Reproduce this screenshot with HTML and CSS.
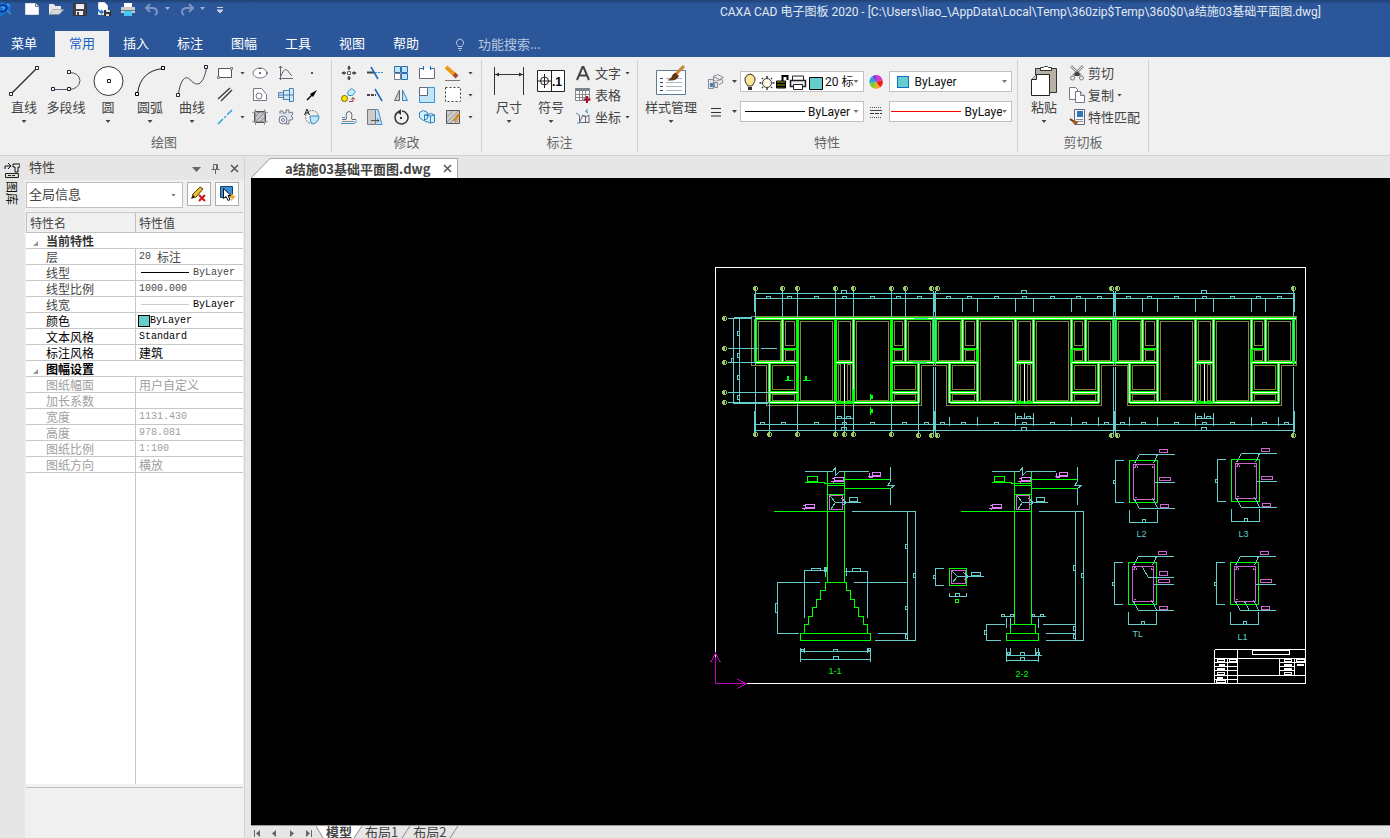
FILE: index.html
```html
<!DOCTYPE html>
<html lang="zh-CN">

<head>
  <meta charset="UTF-8">
  <meta name="viewport" content="width=device-width, initial-scale=1.0">
  <title>CAXA CAD 电子图板 2020</title>
  <link rel="stylesheet" href="styles.css">
</head>

<body>
  <header class="header">
    <div class="titlebar">
      <div class="quick">
        <svg class="logo" width="12" height="18" viewBox="0 0 12 18"><path d="M0 3l3-1 2 2 4-1 2 3-1 3 1 2-2 1-3 0-2 3-4 1z" fill="#1673d8"/><path d="M0 6l3-1 3 1 1 2-2 3-3 1-2-1" fill="none" stroke="#0a2f86" stroke-width="1.5"/><path d="M1 7l3 0 0 3M7 4l3 2M7 11l4 3" stroke="#4db4ff" fill="none"/></svg>
        <button class="quickBtn" aria-label="新建"><svg width="16" height="16"><path d="M1.5 2.5h10l3 3v8h-13z" fill="#fff" stroke="#ddd"/><path d="M11.5 2.5v3h3" fill="#ddd" stroke="#777"/></svg></button>
        <button class="quickBtn" aria-label="打开"><svg width="16" height="16"><path d="M1.5 13.5v-10h4l2 2h5v3" fill="#e8e8e8" stroke="#eee"/><path d="M1 13.5l4-5h11l-5 5z" fill="#d8d8d8" stroke="#888" stroke-width=".5"/></svg></button>
        <button class="quickBtn" aria-label="保存"><svg width="16" height="16"><path d="M1.5 2.5h13v12h-13z" fill="#444" stroke="#333"/><path d="M4 3h8v5h-8zM4 10h7v4h-7z" fill="#eee"/><path d="M5 11h2v3h-2z" fill="#444"/></svg></button>
        <button class="quickBtn" aria-label="另存为"><svg width="16" height="16"><path d="M2.5 1.5h6l3 3v9h-9z" fill="#fff" stroke="#ddd"/><path d="M2 8q1 4 5 3m-2-2l2 2-2 2" stroke="#287acb" stroke-width="1.5" fill="none"/><path d="M8 9h7v6h-7z" fill="#333"/><path d="M10 9h4v2h-4zM10 13h3v2h-3z" fill="#ddd"/></svg></button>
        <button class="quickBtn" aria-label="打印"><svg width="16" height="16"><path d="M4 2h8v4h-8z" fill="#fff"/><path d="M1 6h14v6h-14z" fill="#ccc"/><path d="M1 9h14v1h-14z" fill="#777"/><path d="M4 10h8v5h-8z" fill="#46c8f4"/></svg></button>
        <button class="quickBtn faded" aria-label="撤销"><svg width="16" height="16"><path d="M6 3l-4 4 4 4M2 7h6q5 0 5 4 0 2-2 3" fill="none" stroke="currentColor" stroke-width="2"/></svg></button>
        <svg class="quickArrow" width="7" height="16"><path d="M1 7h5l-2.5 3z" fill="#9db0cf"/></svg>
        <button class="quickBtn faded" aria-label="重做"><svg width="16" height="16"><path d="M10 3l4 4-4 4M14 7h-6q-5 0-5 4 0 2 2 3" fill="none" stroke="currentColor" stroke-width="2"/></svg></button>
        <svg class="quickArrow" width="7" height="16"><path d="M1 7h5l-2.5 3z" fill="#9db0cf"/></svg>
        <button class="quickBtn last" aria-label="自定义快速启动"><svg width="16" height="16"><path d="M3 6.5h6M3 9h6l-3 3z" stroke="#c5cfe0" fill="#c5cfe0"/></svg></button>
      </div>
      <h1 class="title">CAXA CAD 电子图板 2020 - [C:\Users\liao_\AppData\Local\Temp\360zip$Temp\360$0\a结施03基础平面图.dwg]</h1>
    </div>
    <nav class="tabs">
      <a href="#" class="tab menu">菜单</a>
      <a href="#" class="tab active">常用</a>
      <a href="#" class="tab">插入</a>
      <a href="#" class="tab">标注</a>
      <a href="#" class="tab">图幅</a>
      <a href="#" class="tab">工具</a>
      <a href="#" class="tab">视图</a>
      <a href="#" class="tab">帮助</a>
      <label class="search">
        <svg width="12" height="14"><path d="M4 9.5q0-1-1-2a3.5 3.5 0 1 1 6 0q-1 1-1 2zM4 11.5h4M5 13.5h2" fill="none" stroke="#b9c6dc"/></svg>
        <input type="text" placeholder="功能搜索..." aria-label="功能搜索">
      </label>
    </nav>
  </header>

  <div class="ribbon">
    <section class="group draw">
      <div class="tools">
        <button class="big"><svg width="32" height="32"><path d="M3.5 28.5l26-26" stroke="#333" stroke-width="1.5"/><path d="M1.5 27.5h3v3h-3zM27.5 1.5h3v3h-3z" fill="#fff" stroke="#223"/></svg>直线<i class="down"></i></button>
        <button class="big"><svg width="32" height="32"><path d="M3 24.5h15q11 0 12-9-1-8-11-8" fill="none" stroke="#556"/><path d="M1.5 22.5h3v3h-3zM17.5 22.5h3v3h-3zM17.5 5.5h3v3h-3z" fill="#fff" stroke="#223"/></svg>多段线</button>
        <button class="big"><svg width="32" height="32"><circle cx="16.5" cy="16" r="14.5" fill="#fff" stroke="#333"/><path d="M15.5 14.5h3v3h-3z" fill="#fff" stroke="#223"/></svg>圆<i class="down"></i></button>
        <button class="big"><svg width="32" height="32"><path d="M3.5 28.5q3-23 26-25" fill="none" stroke="#222"/><path d="M1.5 27.5h3v3h-3zM27.5 1.5h3v3h-3z" fill="#fff" stroke="#000"/></svg>圆弧<i class="down"></i></button>
        <button class="big"><svg width="32" height="32"><path d="M2.5 29c2-16 8-19 12-14 7 8 13 4 16-12" fill="none" stroke="#445"/><path d="M.5 28.5h3v3h-3zM28.5.5h3v3h-3z" fill="#fff" stroke="#223"/></svg>曲线<i class="down"></i></button>
        <div class="grid drawGrid">
          <button class="small" aria-label="矩形"><svg width="16" height="16"><path d="M1.5 3.5h13v9h-13z" fill="#fff" stroke="#555"/><path d="M.5 11.5h2v2h-2zM13.5 2.5h2v2h-2z" fill="#fff" stroke="#777"/></svg><i class="down"></i></button>
          <button class="small" aria-label="椭圆"><svg width="16" height="16"><ellipse cx="8" cy="8" rx="7" ry="5" fill="#fff" stroke="#778"/><path d="M7 8h2M8 7v2M7 3.5h2M14 8h2" stroke="#445"/></svg></button>
          <button class="small" aria-label="公式曲线"><svg width="16" height="16"><path d="M2.5 1v14M1 13.5h14M3 11q4-12 9-2l2 2M1 3l1.5-2 1.5 2" fill="none" stroke="#667"/></svg></button>
          <button class="small" aria-label="点"><svg width="16" height="16"><path d="M7 7h2v2h-2z" fill="#555"/></svg></button>
          <button class="small" aria-label="平行线"><svg width="16" height="16"><path d="M1 12l12-11M4 14l11-11" stroke="#444" stroke-width="1.5"/></svg></button>
          <button class="small" aria-label="多边形"><svg width="16" height="16"><path d="M1.5 1.5h8l5 6v6h-13z" fill="#fff" stroke="#778"/><circle cx="7" cy="9" r="3" fill="#fff" stroke="#778"/></svg></button>
          <button class="small" aria-label="孔轴"><svg width="16" height="16"><path d="M.5 5.5h5v-2h6v-2h4v13h-4v-2h-6v-2h-5z" fill="#cfeafc" stroke="#5b86b0"/><path d="M0 8h16M5.5 3v10M11.5 1v14" stroke="#4a79aa"/></svg></button>
          <button class="small" aria-label="箭头"><svg width="16" height="16"><path d="M3 13l6-6" stroke="#000" stroke-width="1.5"/><path d="M13 3l-7 4 3 3z"/></svg></button>
          <button class="small" aria-label="中心线"><svg width="16" height="16"><path d="M1 15l14-14" stroke="#27a2dd" stroke-width="1.5" stroke-dasharray="7 2 2 2"/></svg><i class="down"></i></button>
          <button class="small" aria-label="剖面线"><svg width="16" height="16"><path d="M2.5 2.5h11v11h-11z" fill="#c4c8cc" stroke="#555"/><path d="M0 3.5h16M0 12.5h16M3.5 0v16M12.5 0v16" stroke="#999"/><path d="M3 8l5-5M3 13l10-10M8 13l5-5" stroke="#888"/></svg></button>
          <button class="small" aria-label="齿轮"><svg width="16" height="16"><path d="M2 5V2h3v2h3V1h3v3l3-1 1 2-2 2 2 2-1 2H11v4H8v-2M1 8h1" fill="#dfe6ee" stroke="#778"/><circle cx="5" cy="11" r="4" fill="#eef" stroke="#778"/><circle cx="5" cy="11" r="1.5" fill="#fff" stroke="#778"/></svg></button>
          <button class="small" aria-label="局部放大"><svg width="16" height="16"><circle cx="8" cy="8" r="6.5" fill="none" stroke="#777" stroke-dasharray="2 1"/><path d="M6 7h9q0 7-7 8-2-2-2-8z" fill="#bde6fb" stroke="#378fc5"/><path d="M.5 6l2.5-6 2.5 6M1 4h4" fill="none" stroke="#222"/></svg></button>
        </div>
      </div>
      <h2 class="groupName">绘图</h2>
    </section>

    <section class="group modify">
      <div class="tools">
        <div class="grid modifyGrid">
          <button class="small" aria-label="平移"><svg width="16" height="16"><path d="M6.5 6.5h3v3h-3z" fill="none" stroke="#666"/><path d="M8 1v4M8 11v4M1 8h4M11 8h4" stroke="#444" stroke-width="1.5"/><path d="M6 3.5l2-3 2 3zM6 12.5l2 3 2-3zM3.5 6l-3 2 3 2zM12.5 6l3 2-3 2z" fill="#444"/></svg></button>
          <button class="small" aria-label="裁剪"><svg width="16" height="16"><path d="M0 7.5h7" stroke="#444" stroke-width="2"/><path d="M4 2l7 12" stroke="#176ac0" stroke-width="1.5"/><path d="M8 7.5h8" stroke="#3a90db" stroke-dasharray="2 1"/></svg></button>
          <button class="small" aria-label="阵列"><svg width="16" height="16"><path d="M1.5 1.5h6v6h-6zM8.5 1.5h6v6h-6zM8.5 8.5h6v6h-6z" fill="#bfe5fa" stroke="#2d6fae"/><path d="M1.5 8.5h6v6h-6z" fill="#fff" stroke="#778"/></svg></button>
          <button class="small" aria-label="打断"><svg width="16" height="16"><path d="M3.5 3.5h-3v10h15v-10h-3" fill="#fff" stroke="#667"/><path d="M4.5 1v4M11.5 1v4M2 3.5h3M11 3.5h3" stroke="#176ac0"/></svg></button>
          <button class="small" aria-label="删除"><svg width="16" height="16"><path d="M1 2l9 8" stroke="#ee9817" stroke-width="4"/><path d="M9 9l3 3" stroke="#9b4c32" stroke-width="4"/><path d="M0 15.5h15" stroke="#777"/></svg><i class="down"></i></button>
          <button class="small" aria-label="复制平移"><svg width="16" height="16"><circle cx="3.5" cy="11.5" r="3" fill="#fae500" stroke="#776b00"/><path d="M6.5 5l4-3.5 4 3-3 4-4 0z" fill="#c8eafd" stroke="#3c91cf"/><path d="M8 14.5h4v-4m-2 2l2-2 2 2" fill="none" stroke="#9c3838"/></svg></button>
          <button class="small" aria-label="延伸"><svg width="16" height="16"><path d="M0 8h9" stroke="#444" stroke-width="2" stroke-dasharray="3 1"/><path d="M8 2l7 12" stroke="#176ac0" stroke-width="1.5"/></svg></button>
          <button class="small" aria-label="镜像"><svg width="16" height="16"><path d="M6.5 3v10.5h-5z" fill="#ccc" stroke="#667"/><path d="M9.5 3v10.5h5z" fill="#bfe5fa" stroke="#3884be"/></svg></button>
          <button class="small" aria-label="缩放"><svg width="16" height="16"><path d="M.5.5h15v15h-15z" fill="#bfe5fa" stroke="#3f92ce"/><path d="M.5.5h8v8h-8z" fill="#fff" stroke="#667"/></svg></button>
          <button class="small" aria-label="分解"><svg width="16" height="16"><path d="M.5.5h15v14h-15z" fill="#fff" stroke="#444" stroke-dasharray="2 2"/></svg><i class="down"></i></button>
          <button class="small" aria-label="等距线"><svg width="16" height="16"><path d="M1 10.5h4q1-1 0-4 0-4 3-4t3 4q-1 3 0 4h4" fill="none" stroke="#667"/><path d="M0 14.5h13q3-1 2-3M1 8.5h3" fill="none" stroke="#3b92cb"/><path d="M1 12.5h12" stroke="#889"/></svg></button>
          <button class="small" aria-label="拉伸"><svg width="16" height="16"><path d="M.5.5h8v15h-8z" fill="#ccc" stroke="#778"/><path d="M9 .5h2l4 15h-6" fill="#bfe5fa" stroke="#3f92ce"/><path d="M4 11.5h8m-2-2l2 2-2 2" fill="none" stroke="#555"/></svg></button>
          <button class="small" aria-label="旋转"><svg width="16" height="16"><path d="M9 2a6.5 6.5 0 1 1-4 1" fill="none" stroke="#333" stroke-width="1.5"/><path d="M8 0l-4 3 4 3zM7 8h2v2h-2z" fill="#333"/></svg></button>
          <button class="small" aria-label="块"><svg width="16" height="16"><path d="M.5 3.5l4-2 4 2v6l-4 2-4-3zM8.5 5.5l4-1 3 1.5v7l-4 1-6-2v-6z" fill="#d4effd" stroke="#2c83b9"/><path d="M5.5 6l6 1 4-1M11.5 7v7" fill="none" stroke="#2c83b9"/></svg></button>
          <button class="small" aria-label="填充编辑"><svg width="16" height="16"><path d="M1.5 1.5h13v13h-13z" fill="#ccc" stroke="#555"/><path d="M2 8l6-6M2 13l11-11M5 14l9-9M10 14l4-4" stroke="#999"/><path d="M9 12l5-7" stroke="#d58b1c" stroke-width="3"/></svg><i class="down"></i></button>
        </div>
      </div>
      <h2 class="groupName">修改</h2>
    </section>

    <section class="group annotate">
      <div class="tools">
        <button class="big"><svg width="32" height="32"><path d="M1.5 2v28M30.5 2v28M2 9.5h28" stroke="#333"/><path d="M2 9.5l4-2v4zM30 9.5l-4-2v4z" fill="#333"/></svg>尺寸<i class="down"></i></button>
        <button class="big"><svg width="32" height="32"><path d="M2.5 5.5h27v21h-27zM16.5 5v22" fill="#fff" stroke="#222"/><circle cx="9.5" cy="16" r="4" fill="none" stroke="#222"/><path d="M3 16h13M9.5 9v14" stroke="#222"/><text x="17" y="21" class="iconText">.1</text></svg>符号<i class="down"></i></button>
        <div class="rows">
          <button class="line"><svg width="16" height="16"><path d="M2 15l5.5-13h1l5.5 13M4.5 10.5h7" fill="none" stroke="#444" stroke-width="2"/></svg>文字<i class="down"></i></button>
          <button class="line"><svg width="16" height="16"><path d="M.5 1.5h14v12h-14z" fill="#fff" stroke="#888"/><path d="M.5 1h14v3h-14z" fill="#77838f"/><path d="M1 7.5h13M1 10.5h13M4.5 4v9M7.5 4v9M10.5 4v9" stroke="#888"/><path d="M12 9v7M8.5 12.5h7" stroke="#a5122b" stroke-width="2"/></svg>表格</button>
          <button class="line"><svg width="16" height="16"><path d="M4.5 6v7.5h10M4.5 13l3-6h3v6M7 6l4 2 3-2v7" fill="none" stroke="#667"/><path d="M1 4l3 2M2 14h3M10 2l3 2M12 0v3" stroke="#3b92cb"/></svg>坐标<i class="down"></i></button>
        </div>
      </div>
      <h2 class="groupName">标注</h2>
    </section>

    <section class="group props">
      <div class="tools">
        <button class="big wide"><svg width="32" height="32"><path d="M1.5 5.5h29v24h-29z" fill="#fff" stroke="#5d7a94"/><path d="M5 13.5h3M5 17.5h3M5 21.5h3M5 25.5h3" stroke="#445"/><path d="M11 13.5h16M11 17.5h16M11 21.5h16M11 25.5h16" stroke="#a9b6c8"/><path d="M20 10l9-9" stroke="#c98634" stroke-width="3"/><path d="M21 8l3 3q-3 6-12 4 4-1 5-4t4-3z" fill="#63380f"/></svg>样式管理<i class="down"></i></button>
        <div class="propRows">
          <div class="propRow">
            <button class="small" aria-label="图层"><svg width="16" height="16"><path d="M5.5 2.5l4-2 6 3-4 2zM5.5 2.5v3l3 2M9 6.5l5-1 1 3-4 2" fill="#eee" stroke="#889"/><path d="M.5 5.5h5v9h-5zM6.5 8.5h3v5h-3z" fill="#dfe5ea" stroke="#889"/><path d="M2 9h3v4h-3z" fill="#3a83bc"/></svg><i class="down"></i></button>
            <label class="combo">
              <svg width="84" height="20"><path d="M7 14q-4-4-3-8 2-4 5-4t5 4q1 3-3 8z" fill="#fbe595" stroke="#333"/><path d="M7 15h4v3h-4z" fill="#333"/><circle cx="26" cy="11" r="4.5" fill="#fffbe8" stroke="#333"/><path d="M26 4v2M26 16v2M18.5 11h2M31.5 11h2M21 6l1 1M30 15l1 1M31 6l-1 1M22 15l-1 1" stroke="#333" stroke-width="1.5"/><path d="M35.5 9h9v7h-9z" fill="#990" stroke="#000"/><path d="M35 11.5h9M35 14.5h9M41.5 9v-5h5v4" fill="none" stroke="#000" stroke-width="2"/><path d="M51.5 8v-4h11v4" fill="#fff" stroke="#222"/><path d="M49.5 8.5h15v6h-15z" fill="#e8edf4" stroke="#222" stroke-width="1.5"/><path d="M52.5 12.5h9v5h-9z" fill="#fff" stroke="#222"/><path d="M68.5 5.5h13v12h-13z" fill="#6cc" stroke="#000"/></svg>
              <select aria-label="图层"><option>20 标注</option></select><i class="down"></i>
            </label>
            <button class="small wheel" aria-label="颜色"><svg width="16" height="16" viewBox="-8 -8 16 16"><path d="M0 0L0-7A7 7 0 0 1 6.5-2z" fill="#d33ad0"/><path d="M0 0L6.5-2A7 7 0 0 1 4 5.5z" fill="#e82020"/><path d="M0 0L4 5.5A7 7 0 0 1-2 6.5z" fill="#f6a81e"/><path d="M0 0L-2 6.5A7 7 0 0 1-6.5 1z" fill="#71d128"/><path d="M0 0L-6.5 1A7 7 0 0 1-4-5.5z" fill="#279de2"/><path d="M0 0L-4-5.5A7 7 0 0 1 0-7z" fill="#6a48dc"/></svg></button>
            <label class="combo">
              <span class="swatch"></span>
              <select aria-label="颜色"><option>ByLayer</option></select><i class="down"></i>
            </label>
          </div>
          <div class="propRow">
            <button class="small" aria-label="线宽"><svg width="16" height="16"><path d="M3 4.5h10M3 8.5h10M3 12h10" stroke="#333"/></svg><i class="down"></i></button>
            <label class="combo">
              <span class="sample"></span>
              <select aria-label="线宽"><option>ByLayer</option></select><i class="down"></i>
            </label>
            <button class="small wheel" aria-label="线型"><svg width="16" height="16"><path d="M2 3.5h12M2 13.5h12" stroke="#555" stroke-dasharray="1 1"/><path d="M2 6.5h12" stroke="#444"/><path d="M2 9.5h12" stroke="#333" stroke-dasharray="4 1"/></svg></button>
            <label class="combo">
              <span class="sample red"></span>
              <select aria-label="线型"><option>ByLayer</option></select><i class="down"></i>
            </label>
          </div>
        </div>
      </div>
      <h2 class="groupName">特性</h2>
    </section>

    <section class="group clip">
      <div class="tools">
        <button class="big"><svg width="32" height="32"><path d="M7.5 3.5h21v24h-21z" fill="#b8afa5" stroke="#333"/><path d="M12.5 5.5v-3h3l1-1h3l1 1h3v3z" fill="#fff" stroke="#333"/><path d="M3.5 14.5l5-5h13v21h-18z" fill="#fff" stroke="#222"/><path d="M3.5 14.5h5v-5" fill="#ccc" stroke="#222"/></svg>粘贴<i class="down"></i></button>
        <div class="rows">
          <button class="line"><svg width="16" height="16"><path d="M2 1l10 10M14 1l-10 10" stroke="#888" stroke-width="2.5"/><path d="M2 1l10 10M14 1l-10 10" stroke="#eee"/><path d="M5 9l3-3 3 3-1 2h-4z" fill="#444"/><circle cx="3.5" cy="13" r="2" fill="none" stroke="#778"/><circle cx="12.5" cy="13" r="2" fill="none" stroke="#778"/></svg>剪切</button>
          <button class="line"><svg width="16" height="16"><path d="M.5.5h6l2 2v10h-8z" fill="#fff" stroke="#778"/><path d="M6.5 4.5h5l4 4v7h-9z" fill="#fff" stroke="#778"/><path d="M11.5 4.5v4h4" fill="#ddd" stroke="#778"/></svg>复制<i class="down"></i></button>
          <button class="line"><svg width="16" height="16"><path d="M5.5.5h10v15h-10z" fill="#f5f8fb" stroke="#667"/><path d="M8 2h6v6h-6z" fill="#3276b2"/><path d="M7 10.5h7M7 12.5h7" stroke="#889"/><path d="M1 10l3 1 3 1 2 1-1 2h-3z" fill="#a85715"/><path d="M1 10l3 2" stroke="#7a390c" stroke-width="2"/></svg>特性匹配</button>
        </div>
      </div>
      <h2 class="groupName">剪切板</h2>
    </section>
  </div>

  <main class="work">
    <aside class="dock">
      <button class="dockTab">
        <svg width="16" height="17"><path d="M1 7v-3h5M4 1l3 3-3 3M9 2h7v3h-2v5h-3v-5h-2z" fill="none" stroke="#111"/><path d="M1.5 11.5h13v4h-13z" fill="#e0e0d0" stroke="#222"/><path d="M4 13.5h8" stroke="#222" stroke-dasharray="3 1"/></svg>
        <span>图库</span>
      </button>
    </aside>

    <section class="panel">
      <div class="panelHead">
        <h2>特性</h2>
        <button aria-label="菜单"><svg width="11" height="11"><path d="M1 4h9l-4.5 5z" fill="#666"/></svg></button>
        <button aria-label="固定"><svg width="11" height="11"><path d="M3.5 1.5h4v5h-4zM1.5 6.5h8M5.5 7v4M6.5 2v5" fill="none" stroke="#666"/></svg></button>
        <button aria-label="关闭"><svg width="11" height="11"><path d="M2 2l7 7M9 2l-7 7" stroke="#555" stroke-width="1.5"/></svg></button>
      </div>
      <div class="panelTools">
        <label class="combo scope"><select aria-label="选择范围"><option>全局信息</option></select><i class="down"></i></label>
        <button class="toolBtn" aria-label="清除选择"><svg width="18" height="18"><path d="M2 13l1-4 7-7 3 2-7 8z" fill="#f0bd35" stroke="#553c08"/><path d="M1 14l2-4 2 2z" fill="#222"/><path d="M9 10l6 6M15 10l-6 6" stroke="#d01616" stroke-width="2"/></svg></button>
        <button class="toolBtn" aria-label="快速选择"><svg width="18" height="18"><path d="M2.5 1.5h12v11h-12z" fill="#3a8fd9" stroke="#17406f"/><path d="M5.5 3.5v10l2.5-2 2 4 2-1-2-4h3z" fill="#fff" stroke="#111"/><path d="M14 9l-3 4h3l-2 4 6-6h-3l1-2z" fill="#f2a62c"/></svg></button>
      </div>
      <div class="tableBox">
        <table class="propTable">
          <thead>
            <tr><th class="nameCol">特性名</th><th>特性值</th></tr>
          </thead>
          <tbody>
            <tr class="cat"><td colspan="2"><i class="fold"></i>当前特性</td></tr>
            <tr class="soft"><td>层</td><td><span class="mono">20 </span>标注</td></tr>
            <tr class="soft"><td>线型</td><td><div class="lineCell"><span class="stroke"></span><span class="mono">ByLayer</span></div></td></tr>
            <tr class="soft"><td>线型比例</td><td><span class="mono">1000.000</span></td></tr>
            <tr><td class="softCell">线宽</td><td><div class="lineCell"><span class="stroke light"></span><span class="mono">ByLayer</span></div></td></tr>
            <tr><td>颜色</td><td><div class="lineCell"><span class="chip"></span><span class="mono">ByLayer</span></div></td></tr>
            <tr><td>文本风格</td><td><span class="mono">Standard</span></td></tr>
            <tr><td>标注风格</td><td>建筑</td></tr>
            <tr class="cat black"><td colspan="2"><i class="fold"></i>图幅设置</td></tr>
            <tr class="off"><td>图纸幅面</td><td>用户自定义</td></tr>
            <tr class="off"><td>加长系数</td><td></td></tr>
            <tr class="off"><td>宽度</td><td><span class="mono">1131.430</span></td></tr>
            <tr class="off"><td>高度</td><td><span class="mono">978.081</span></td></tr>
            <tr class="off"><td>图纸比例</td><td><span class="mono">1:100</span></td></tr>
            <tr class="off"><td>图纸方向</td><td>横放</td></tr>
          </tbody>
        </table>
        <div class="tableRest"></div>
      </div>
      <div class="hint"></div>
    </section>

    <section class="doc">
      <div class="docTabs">
        <svg width="22" height="20"><path d="M0 20L18 1.5Q19 .5 22 .5V20z" fill="#fff"/><path d="M0 20L18 1.5Q19 .5 22 .5" fill="none" stroke="#999"/></svg>
        <div class="docTab">
          <a href="#">a结施03基础平面图.dwg</a>
          <button aria-label="关闭文件"><svg width="9" height="9"><path d="M1 1l7 7M8 1l-7 7" stroke="#555" stroke-width="1.5"/></svg></button>
        </div>
      </div>

      <svg class="canvas">
        <defs>
          <!-- one dwelling: dimension texts, room outlines and walls, repeated every 180 -->
          <g id="dims" class="cyan">
            <path d="M766 296h4v2h-4zM787 296h4v2h-4zM814 296h4v2h-4zM842 296h4v2h-4zM870 296h4v2h-4zM896 296h4v2h-4zM917 296h4v2h-4zM841 290h5v3h-5z"/>
            <path d="M782 298v13M797 298v13M835 298v13M853 298v13M891 298v13M905 298v13"/>
            <path d="M760 422h4v2h-4zM781 422h4v2h-4zM814 422h4v2h-4zM842 422h4v2h-4zM870 422h4v2h-4zM902 422h4v2h-4zM924 422h4v2h-4zM841 427h5v3h-5zM837 416h4v2h-4zM846 416h4v2h-4z"/>
            <path d="M769 416v9M797 416v9M835 412v13M844 412v6M853 412v13M891 416v9M918 416v9M835 418h18"/>
          </g>
          <g id="rooms" class="olive">
            <path d="M758 321h22v39h-22zM785 321h9v24h-9zM785 350h9v10h-9zM800 321h32v79h-32zM838 321h12v39h-12zM856 321h32v79h-32zM894 321h8v24h-8zM894 350h8v10h-8zM908 321h22v39h-22z"/>
            <path d="M772 365h22v24h-22zM772 394h22v6h-22zM838 364h2v36h-2zM847 364h3v36h-3zM894 365h21v24h-21zM894 394h21v6h-21z"/>
          </g>
          <g id="walls">
            <path class="wall" d="M755 318v44M782 318v44M797 318v84M835 318v84M853 318v84M891 318v84M905 318v44M933 318v44M769 362v40M918 362v40M755 318h180M755 362h42M835 362h18M891 362h44M769 392h28M891 392h27M769 402h149"/>
            <path class="wallThin" d="M783 348h14M891 348h14"/>
            <path class="white" d="M782 318v44M853 318v70M905 318v44M769 362v40M844 362v40M918 362v40M755 318h180M755 362h42M835 362h18M891 362h44M769 392h28M891 392h27M769 402h66M853 402h65"/>
          </g>
          <g id="axisMark">
            <path d="M-1.5-2.5h3v1h1v3h-1v1h-3v-1h-1v-3h1z"/>
            <path class="axisGap" d="M.5-1.5h1v3h-1z"/>
          </g>
          <!-- upper part shared by the two footing sections -->
          <g id="column">
            <path class="green" d="M827 471v111M844 471v111M804 482h20v1h20M827 485h17M827 494h17M773 511h71M844 479h46M844 488h46M807 476h10v6h-10zM807 481h10"/>
            <path class="cyan" d="M804 471h28l3-4v8l2-2 2-2h29M890 466v15l-3 4h7l-4 3v16M830 496l5 6-5 7M835 502h25M849 497h8v4h-8zM841 498l5 4-4 3"/>
            <path class="pink" d="M829 495h13v14h-13z"/>
            <path class="violet" d="M834 477h9v4h-9zM834 480h9M831 478h3M830 481h4l-2 2M872 472h8v4h-8zM872 475h8M869 472v5h3M867 476h5l-2 2M805 504h9v4h-9zM805 507h9M802 505h3M801 508h4l-2 2"/>
          </g>
          <!-- beam section -->
          <g id="beam">
            <path class="green" d="M1129 460h28v42h-28z"/>
            <path class="pink" d="M1133 464h21v35h-21zM1134 465h2l2 3M1136 464l-2 4M1152 465v2h2M1134 497h2M1152 497v2M1159 449h8v3h-8zM1159 477h11v3h-11zM1160 504h8v3h-8z"/>
            <path class="cyan" d="M1134 463l5-9h35M1153 463l4-9M1154 482h20M1134 499l5 9h35M1153 499l4 9M1123 460h-8v42h8M1113 480h2v3h-2zM1129 509v13h28v-13M1142 519h3v3h-3z"/>
          </g>
        </defs>

        <g transform="translate(-250.5 -177.5)">
          <path class="olive" d="M751 316H1296V365H1281V405H1127V365H1101V405H946V365H921V405H766V365H751z"/>
          <use href="#rooms"/><use href="#rooms" x="180"/><use href="#rooms" x="360"/>
          <use href="#dims"/><use href="#dims" x="180"/><use href="#dims" x="360"/>
          <path class="cyan" d="M755 293H1294M755 298H1294M755 424H1294M755 430H1294M782 290v26M797 290v26M835 290v26M853 290v26M891 290v26M905 290v26M769 402v31M797 402v31M835 402v31M844 402v31M853 402v31M891 402v31M918 402v31"/>
          <path class="cyan" d="M754 293v18M754 410v21M1294 293v18M1294 410v21"/>
          <use href="#walls"/><use href="#walls" x="180"/><use href="#walls" x="360"/>
          <path class="wall" d="M1293 318v44"/>
          <path class="white" d="M962 318v44M977 318v30M977 362v40M1015 318v84M1033 318v84M1071 318v30M1071 362v40M1142 318v44M1157 318v84M1195 318v84M1213 318v84M1251 318v30M1251 362v40"/>
          <path class="cyan" stroke-dasharray="70 2 2 2" d="M755 290v143M933 290v143M935 290v143M1113 290v143M1115 290v143M1293 290v143"/>
          <path class="cyan wideCyan" d="M934 293v18M934 410v20M1114 293v18M1114 410v20"/>
          <path class="cyan" d="M727 318h24M727 348h30M760 348h16M727 362h28M727 392h42M727 402h42M733 317h18M733 403h34M733 317v86M739 318v85M737 331h2v4h-2zM737 353h2v4h-2zM737 375h2v4h-2zM737 395h2v4h-2zM731 358h2v4h-2zM913 318h14M912 362h14"/>
          <g class="lime">
            <use href="#axisMark" x="755" y="288"/><use href="#axisMark" x="782" y="288"/><use href="#axisMark" x="797" y="288"/><use href="#axisMark" x="835" y="288"/><use href="#axisMark" x="853" y="288"/><use href="#axisMark" x="891" y="288"/><use href="#axisMark" x="905" y="288"/><use href="#axisMark" x="931" y="288"/><use href="#axisMark" x="937" y="288"/><use href="#axisMark" x="1111" y="288"/><use href="#axisMark" x="1117" y="288"/><use href="#axisMark" x="1293" y="288"/>
            <use href="#axisMark" x="755" y="434"/><use href="#axisMark" x="769" y="434"/><use href="#axisMark" x="797" y="434"/><use href="#axisMark" x="835" y="434"/><use href="#axisMark" x="844" y="434"/><use href="#axisMark" x="853" y="434"/><use href="#axisMark" x="891" y="434"/><use href="#axisMark" x="918" y="435"/><use href="#axisMark" x="931" y="435"/><use href="#axisMark" x="937" y="435"/><use href="#axisMark" x="1111" y="435"/><use href="#axisMark" x="1117" y="435"/><use href="#axisMark" x="1293" y="435"/>
            <use href="#axisMark" x="724" y="318"/><use href="#axisMark" x="724" y="348"/><use href="#axisMark" x="724" y="362"/><use href="#axisMark" x="724" y="392"/><use href="#axisMark" x="724" y="402"/>
          </g>
          <path class="green" d="M784 380h8M787 375v5M788 375v5M802 380h8M805 375v5M806 375v5M870 393v6M871 394v4M872 394v4M870 406v8M871 408v4M872 408v4"/>

          <!-- section 1-1 -->
          <use href="#column"/>
          <path class="green" d="M800 633h70v7h-70zM804 633v-9h4v-8h4v-9h4v-8h4v-9h5v-8h21v8h4v9h4v8h4v9h5v8h4v9"/>
          <path class="cyan" d="M819 582h-42v51h21M775 603h2v9h-2zM804 617v-47h23M811 568h9v2h-9zM825 567v9M824 567h2v4h-2zM846 567v8M844 571h23v46M852 568h8v3h-8zM851 511h64v129h-41M907 511v129M853 582h54M877 633h30M905 544h2v4h-2zM905 606h2v3h-2zM905 634h2v4h-2zM913 573h2v4h-2zM800 647v14M870 647v14M804 647v5M867 647v5M800 651h70M800 659h70M833 649h4v2h-4zM833 656h5v3h-5zM801 649h2v2h-2zM868 648h2v2h-2z"/>
          <text class="cadText cadGreen" x="828" y="673">1-1</text>

          <!-- section 2-2 -->
          <use href="#column" x="187"/>
          <path class="green" d="M1014 582v42M1031 582v42M1010 624h25v9h-25zM1006 633h32v7h-32z"/>
          <path class="cyan" d="M1038 511h45v129h-38M1075 511v129M1042 624h33M1045 633h30M1073 565h2v5h-2zM1073 626h2v4h-2zM1073 634h2v4h-2zM1081 573h2v4h-2zM1004 624h-18v16h14M984 630h2v4h-2zM1001 616h13M1030 616h15M1001 614h3v2h-3zM1010 614h3v2h-3zM1032 614h2v2h-2zM1040 614h3v2h-3zM1006 617v10M1010 617v10M1038 617v10M1006 647v14M1010 647v8M1035 647v8M1038 647v14M1005 655h36M1006 660h32M1020 652h4v3h-4zM1020 657h4v3h-4zM1007 652h2v2h-2zM1036 652h3v3h-3z"/>
          <text class="cadText cadGreen" x="1015" y="676">2-2</text>
          <path class="green" d="M949 568h17v17h-17zM955 599h3v3h-3z"/>
          <path class="pink" d="M951 570h14v13h-14z"/>
          <path class="cyan" d="M952 571l5 5-5 6M957 576h26M971 572h9v3h-9zM963 572l5 4-4 3M943 568h-8v17h8M933 575h2v3h-2zM949 592v4h17v-4M955 593h4v3h-4z"/>

          <!-- beam sections -->
          <use href="#beam"/><use href="#beam" x="102" y="-1"/><use href="#beam" x="-1" y="102"/><use href="#beam" x="101" y="102"/>
          <path class="cyan" d="M1142 567l6 10h25M1244 601l5 9"/>
          <path class="pink" d="M1159 571h8v4h-8z"/>
          <text class="cadText" x="1136" y="536">L2</text>
          <text class="cadText" x="1238" y="536">L3</text>
          <text class="cadText" x="1132" y="636">TL</text>
          <text class="cadText" x="1237" y="639">L1</text>

          <!-- sheet frame and title block -->
          <path class="white" d="M715 267H1305V683H715zM1214 649h91M1214 649v34M1237 649v34M1214 658h91M1252 650h37v4h-37zM1227 658v25M1214 662h23M1214 666h23M1214 670h23M1214 675h23M1214 679h23M1279 658v17M1294 658v17M1279 662h26M1279 666h15M1279 670h15M1237 675h68"/>
          <path class="white" d="M1217 659h7v2h-7zM1229 659h7v2h-7zM1219 664h5v1h-5zM1217 668h7v1h-7zM1217 672h7v2h-7zM1217 677h5v1h-5zM1216 680h9v2h-9zM1284 659h7v2h-7zM1284 664h7v1h-7zM1284 668h7v1h-7zM1284 672h7v2h-7zM1296 659h8v2h-8zM1297 664h6v1h-6z"/>
          <path class="ucs" d="M710 662l5-9 5 9M715 656v27h30M737 679l9 4-9 5"/>
        </g>
      </svg>

      <div class="sheets">
        <div class="sheetNav">
          <button aria-label="第一页"><svg width="9" height="9"><path d="M1.5 1v7" stroke="#666"/><path d="M7 1v7l-4-3.5z" fill="#666"/></svg></button>
          <button aria-label="上一页"><svg width="9" height="9"><path d="M6 1v7l-4-3.5z" fill="#666"/></svg></button>
          <button aria-label="下一页"><svg width="9" height="9"><path d="M3 1v7l4-3.5z" fill="#666"/></svg></button>
          <button aria-label="最后一页"><svg width="9" height="9"><path d="M2 1v7l4-3.5z" fill="#666"/><path d="M7.5 1v7" stroke="#666"/></svg></button>
        </div>
        <svg width="9" height="12"><path d="M0 0h9v12h-2z" fill="#fff"/><path d="M0 0l7 12" stroke="#888"/></svg>
        <a href="#" class="sheet current">模型</a>
        <svg width="9" height="12"><path d="M0 0h9l-8 12h-1z" fill="#fff"/><path d="M9 0l-8 12" stroke="#888"/></svg>
        <a href="#" class="sheet">布局1</a>
        <svg width="9" height="12"><path d="M9 0l-8 12" stroke="#888"/></svg>
        <a href="#" class="sheet">布局2</a>
        <svg width="9" height="12"><path d="M9 0l-8 12" stroke="#888"/></svg>
      </div>
    </section>
  </main>
</body>

</html>
```

FILE: styles.css
```css
* {
  box-sizing: border-box;
}

body {
  margin: 0;
  height: 100vh;
  display: flex;
  flex-direction: column;
  overflow: hidden;
  background-color: #e6e6e6;
  font-family: "Noto Sans CJK SC", sans-serif;
  font-size: 13px;
  line-height: 16px;
  color: #444;
}

h1,
h2 {
  margin: 0;
  font-size: 13px;
  font-weight: normal;
}

a {
  color: inherit;
  text-decoration: none;
}

button {
  display: flex;
  align-items: center;
  padding: 0;
  border: none;
  background: none;
  font: inherit;
  color: inherit;
  white-space: nowrap;
}

select,
input {
  min-width: 0;
  padding: 0;
  border: none;
  outline: none;
  background: none;
  appearance: none;
  font: inherit;
  color: inherit;
}

svg {
  display: block;
  flex: none;
}

.down {
  flex: none;
  width: 5px;
  height: 3px;
  background: #444;
  clip-path: polygon(0 0, 100% 0, 50% 100%);
}

/* title bar and tabs */
.header {
  flex: none;
  background: linear-gradient(#1f4274, #2b579a 4px);
  color: #fff;
}

.titlebar {
  display: flex;
  justify-content: space-between;
  height: 31px;
}

.quick {
  display: flex;
  height: 18px;
}

.logo {
  margin-right: 12px;
}

.quickBtn {
  width: 24px;
}

.quickBtn.faded {
  color: #7b96c2;
  width: 20px;
}

.quickBtn.last {
  width: 16px;
}

.quickArrow {
  margin-right: 8px;
}

.title {
  padding: 4px 69px 0 0;
  font-family: Roboto, "Noto Sans CJK SC", sans-serif;
  font-size: 12px;
  color: #e3e9f2;
}

.tabs {
  display: flex;
  height: 26px;
}

.tab {
  width: 54px;
  padding-top: 4px;
  text-align: center;
}

.tab.menu {
  width: 55px;
  padding-right: 7px;
}

.tab.active {
  background-color: #f0f0f0;
  color: #1a62c0;
}

.search {
  display: flex;
  align-items: center;
  gap: 12px;
  margin-left: 21px;
  color: #b9c6dc;
}

.search input {
  width: 100px;
}

.search input::placeholder {
  color: #b9c6dc;
  opacity: 1;
}

/* ribbon */
.ribbon {
  display: flex;
  flex: none;
  height: 99px;
  padding-top: 3px;
  background-color: #f0f0f0;
  border-bottom: 1px solid #d0d0d0;
}

.group {
  height: 92px;
  border-right: 1px solid #d0d0d0;
}

.draw {
  width: 332px;
  padding: 0 6px 0 3px;
}

.modify {
  width: 150px;
  padding: 0 9px;
}

.annotate {
  width: 156px;
  padding: 0 6px;
}

.props {
  width: 380px;
  padding: 0 5px 0 4px;
}

.clip {
  width: 131px;
  padding: 0 5px;
}

.tools {
  display: flex;
  height: 74px;
}

.groupName {
  text-align: center;
  color: #666;
}

.big {
  flex: none;
  flex-direction: column;
  width: 42px;
  height: 66px;
  padding-top: 5px;
}

.big.wide {
  width: 58px;
}

.big svg {
  margin-bottom: 2px;
}

.big .down {
  margin-top: 5px;
}

.grid {
  display: grid;
  grid-auto-rows: 22px;
  padding-top: 2px;
}

.drawGrid {
  grid-template-columns: 35px 26px 26px 26px;
  margin-left: 4px;
}

.modifyGrid {
  grid-template-columns: 26px 26px 26px 26px 34px;
}

.small {
  gap: 7px;
}

.rows {
  padding: 2px 0 0 3px;
}

.line {
  height: 22px;
  gap: 4px;
}

.clip .rows {
  padding-left: 4px;
}

.clip .line {
  gap: 3px;
}

.iconText {
  font: bold 12px "Liberation Sans", sans-serif;
}

.propRows {
  display: flex;
  flex: 1;
  flex-direction: column;
  gap: 9px;
  min-width: 0;
  padding: 11px 0 0 8px;
}

.propRow {
  display: flex;
}

.propRow .small {
  flex: none;
  width: 32px;
  gap: 8px;
}

.propRow .wheel {
  width: 25px;
  justify-content: center;
}

.combo {
  display: flex;
  flex: 1 1 0;
  align-items: center;
  min-width: 0;
  height: 21px;
  padding-right: 4px;
  background-color: #fff;
  border: 1px solid #c0c0c0;
  font-family: Roboto, "Noto Sans CJK SC", sans-serif;
  font-size: 12px;
  color: #111;
}

.combo select {
  flex: 1 1 0;
  width: 0;
  overflow: hidden;
}

.combo .down {
  background: #777;
}

.swatch {
  flex: none;
  width: 12px;
  height: 12px;
  margin: 0 6px 0 7px;
  background-color: #66cccc;
  border: 1px solid #0a70d0;
}

.sample {
  flex: none;
  width: 60px;
  height: 1px;
  margin: 0 3px 0 4px;
  background-color: #000;
}

.sample.red {
  width: 70px;
  margin: 0 4px 0 1px;
  background-color: #f00;
}

/* work area */
.work {
  display: flex;
  flex: 1;
  min-height: 0;
}

.dock {
  width: 25px;
  padding: 6px 0 0 4px;
}

.dockTab {
  flex-direction: column;
  gap: 2px;
  font-size: 12px;
  color: #111;
}

.dockTab span {
  writing-mode: vertical-rl;
  text-orientation: sideways;
}

.panel {
  display: flex;
  flex-direction: column;
  width: 220px;
  border-right: 1px solid #d4d4d4;
  background-color: #f0f0f0;
}

.panelHead {
  display: flex;
  gap: 8px;
  height: 24px;
  padding: 0 4px;
  background-color: #e6e6e6;
}

.panelHead h2 {
  flex: 1;
  padding-top: 3px;
}

.panelTools {
  display: flex;
  gap: 4px;
  height: 32px;
  padding: 2px 5px 0 1px;
}

.scope {
  height: 26px;
  padding: 0 6px 0 2px;
  font-size: 13px;
  color: #444;
}

.toolBtn {
  justify-content: center;
  width: 24px;
  height: 24px;
  background-color: #fff;
  border: 1px solid #adadad;
}

.tableBox {
  display: flex;
  flex: 1;
  flex-direction: column;
  margin: 0 1px;
  border-top: 1px solid #c8c8c8;
  background-color: #fff;
}

.propTable {
  width: 100%;
  table-layout: fixed;
  border-collapse: separate;
  border-spacing: 0;
  font-size: 12px;
  line-height: 15px;
  color: #000;
}

.propTable th {
  height: 20px;
  padding: 0 3px;
  border: 1px solid #c0c0c0;
  border-width: 0 0 1px 1px;
  background-color: #f0f0f0;
  font-weight: normal;
  text-align: left;
  color: #444;
}

.propTable .nameCol {
  width: 109px;
}

.propTable td {
  height: 16px;
  padding: 0 3px;
  border-bottom: 1px solid #c8c8c8;
}

.propTable td:first-child {
  padding-left: 20px;
}

.propTable td + td {
  border-left: 1px solid #c8c8c8;
}

.propTable .cat td {
  padding-left: 7px;
  font-weight: bold;
  color: #333;
}

.propTable .black td {
  color: #000;
}

.fold {
  display: inline-block;
  width: 5px;
  height: 5px;
  margin-right: 8px;
  background-color: #999;
  clip-path: polygon(100% 0, 100% 100%, 0 100%);
}

.soft td,
.propTable .softCell {
  color: #444;
}

.off td {
  color: #a0a0a0;
}

.mono {
  display: inline-block;
  vertical-align: top;
  font-family: "Liberation Mono", monospace;
  font-size: 10px;
  line-height: 15px;
  white-space: pre;
}

.lineCell {
  display: flex;
  align-items: center;
  height: 15px;
}

.stroke {
  width: 48px;
  height: 1px;
  margin: 0 4px 0 2px;
  background-color: #000;
}

.stroke.light {
  background-color: #ccc;
}

.chip {
  width: 12px;
  height: 12px;
  margin-left: -1px;
  border: 1px solid #000;
  background-color: #66cccc;
}

.tableRest {
  flex: 1;
  width: 110px;
  border-right: 1px solid #c8c8c8;
}

.hint {
  height: 51px;
  margin: 3px 1px 0;
  border-top: 1px solid #c0c0c0;
}

/* drawing */
.doc {
  display: flex;
  flex: 1;
  flex-direction: column;
  min-width: 0;
  margin-left: 6px;
}

.docTabs {
  display: flex;
  align-items: flex-end;
  height: 22px;
}

.docTab {
  display: flex;
  align-items: center;
  height: 20px;
  gap: 12px;
  padding: 0 5px 0 12px;
  border: 1px solid #aaa;
  border-width: 1px 1px 0 0;
  background-color: #fff;
  font-weight: bold;
}

.canvas {
  flex: 1;
  width: 100%;
  min-height: 0;
  background-color: #000;
  fill: none;
  stroke-width: 1px;
  shape-rendering: crispEdges;
}

.cyan {
  stroke: #66cccc;
}

.wideCyan {
  stroke-width: 3px;
}

.olive {
  stroke: #868643;
}

.green {
  stroke: #00ff00;
}

.wall,
.wallThin {
  stroke: #00ff00;
  stroke-width: 3px;
}

.wallThin {
  stroke-width: 2px;
}

.white {
  stroke: #fff;
}

.lime {
  fill: #99cc66;
}

.axisGap {
  fill: #000;
}

.pink {
  stroke: #cc66cc;
}

.violet {
  stroke: #e080ff;
}

.ucs {
  stroke: #c000c0;
}

.cadText {
  font: 9px "Liberation Sans", sans-serif;
  fill: #66cccc;
}

.cadGreen {
  fill: #00ff00;
}

.sheets {
  display: flex;
  height: 13px;
  border-top: 1px solid #999;
}

.sheetNav {
  display: flex;
  gap: 8px;
  width: 65px;
  padding: 3px 0 0 2px;
}

.sheetNav button {
  height: 9px;
}

.sheet {
  padding: 0 3px;
  font-size: 13px;
  line-height: 12px;
}

.sheet.current {
  padding: 0 1px;
  background-color: #fff;
  font-weight: bold;
}
```
